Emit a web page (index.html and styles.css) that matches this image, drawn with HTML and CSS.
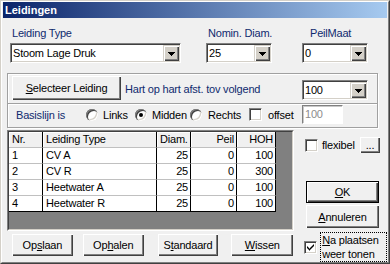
FILE: index.html
```html
<!DOCTYPE html>
<html>
<head>
<meta charset="utf-8">
<link rel="stylesheet" href="styles.css">
</head>
<body>
<div class="window">
  <div class="frame">
    <div class="titlebar">Leidingen</div>

    <div class="fields">
      <div class="field f-type">
        <div class="label">Leiding Type</div>
        <div class="combo"><span class="combo-text">Stoom Lage Druk</span><span class="combo-btn"><svg width="7" height="4" viewBox="0 0 7 4"><path d="M0 0H7V1H6V2H5V3H4V4H3V3H2V2H1V1H0Z"/></svg></span></div>
      </div>
      <div class="field f-diam">
        <div class="label label-diam">Nomin. Diam.</div>
        <div class="combo"><span class="combo-text">25</span><span class="combo-btn"><svg width="7" height="4" viewBox="0 0 7 4"><path d="M0 0H7V1H6V2H5V3H4V4H3V3H2V2H1V1H0Z"/></svg></span></div>
      </div>
      <div class="field f-peil">
        <div class="label label-peil">PeilMaat</div>
        <div class="combo"><span class="combo-text">0</span><span class="combo-btn"><svg width="7" height="4" viewBox="0 0 7 4"><path d="M0 0H7V1H6V2H5V3H4V4H3V3H2V2H1V1H0Z"/></svg></span></div>
      </div>
    </div>

    <div class="group">
      <div class="row-a">
        <div class="btn btn-select"><span><u>S</u>electeer Leiding</span></div>
        <div class="navy hoh-text">Hart op hart afst. tov volgend</div>
        <div class="combo combo-hoh"><span class="combo-text">100</span><span class="combo-btn"><svg width="7" height="4" viewBox="0 0 7 4"><path d="M0 0H7V1H6V2H5V3H4V4H3V3H2V2H1V1H0Z"/></svg></span></div>
      </div>
      <div class="row-b">
        <div class="navy basis">Basislijn is</div>
        <div class="opt opt-links"><span class="radio"></span><span class="opt-text">Links</span></div>
        <div class="opt opt-midden"><span class="radio checked"></span><span class="opt-text">Midden</span></div>
        <div class="opt opt-rechts"><span class="radio"></span><span class="opt-text rechts-text">Rechts</span></div>
        <span class="check"></span>
        <span class="offset-label">offset</span>
        <div class="textbox disabled">100</div>
      </div>
    </div>

    <div class="main">
      <div class="grid-box">
        <div class="grid-inner">
          <div class="table">
            <div class="cell head">Nr.</div>
            <div class="cell head">Leiding Type</div>
            <div class="cell head">Diam.</div>
            <div class="cell head num">Peil</div>
            <div class="cell head num">HOH</div>

            <div class="cell">1</div>
            <div class="cell">CV A</div>
            <div class="cell num">25</div>
            <div class="cell num">0</div>
            <div class="cell num">100</div>

            <div class="cell">2</div>
            <div class="cell">CV R</div>
            <div class="cell num">25</div>
            <div class="cell num">0</div>
            <div class="cell num">300</div>

            <div class="cell">3</div>
            <div class="cell">Heetwater A</div>
            <div class="cell num">25</div>
            <div class="cell num">0</div>
            <div class="cell num">100</div>

            <div class="cell last">4</div>
            <div class="cell last">Heetwater R</div>
            <div class="cell num last">25</div>
            <div class="cell num last">0</div>
            <div class="cell num last">100</div>
          </div>
        </div>
      </div>
      <div class="side">
        <div class="flex-row">
          <span class="check"></span>
          <span class="flex-label">flexibel</span>
          <div class="btn btn-dots">...</div>
        </div>
        <div class="btn btn-ok"><span><u>O</u>K</span></div>
        <div class="btn btn-cancel"><span><u>A</u>nnuleren</span></div>
      </div>
    </div>

    <div class="bottom">
      <div class="btn btn-bottom b-opslaan"><span>Op<u>s</u>laan</span></div>
      <div class="btn btn-bottom b-ophalen"><span>Op<u>h</u>alen</span></div>
      <div class="btn btn-bottom b-standaard"><span>S<u>t</u>andaard</span></div>
      <div class="btn btn-bottom b-wissen"><span><u>W</u>issen</span></div>
      <span class="check checked-box"><svg width="9" height="9" viewBox="0 0 9 9"><path d="M1 3.5H2V4.5H3V5.5H4V4.5H5V3.5H6V2.5H7V1.5H8V3.5H7V4.5H6V5.5H5V6.5H4V7.5H3V6.5H2V5.5H1Z"/></svg></span>
      <div class="na-label"><u>N</u>a plaatsen<br>weer tonen</div>
    </div>
  </div>
</div>
</body>
</html>
```

FILE: styles.css
```css
body {
  margin: 0;
  font-family: "Liberation Sans", Arial, sans-serif;
  font-size: 11px;
  letter-spacing: -0.2px;
  color: #000;
  background: #fff;
}

.window {
  box-sizing: border-box;
  width: 390px;
  height: 264px;
  border: 1px solid;
  border-color: #d4d0c8 #404040 #404040 #d4d0c8;
  background: #f0f0f0;
  overflow: hidden;
}

.frame {
  box-sizing: border-box;
  height: 262px;
  border: 1px solid;
  border-color: #ffffff #808080 #808080 #ffffff;
  padding: 0 1px;
}

.titlebar {
  height: 16px;
  line-height: 16px;
  padding-left: 2px;
  background: linear-gradient(to right, #0a246a, #a6caf0);
  color: #fff;
  font-weight: bold;
  font-size: 11px;
  letter-spacing: 0;
}

.navy { color: #0f2a6e; }

/* top fields */
.fields {
  display: flex;
  margin-top: 9px;
}
.field { display: flex; flex-direction: column; }
.f-type { margin-left: 7px; width: 171px; }
.f-diam { margin-left: 25px; width: 66px; }
.f-peil { margin-left: 30px; width: 66px; }

.label {
  height: 13px;
  line-height: 13px;
  margin-bottom: 3px;
  padding-left: 2px;
  color: #0f2a6e;
  white-space: nowrap;
}
.label-peil { padding-left: 8px; }

.combo {
  box-sizing: border-box;
  height: 20px;
  display: flex;
  align-items: center;
  background: #fff;
  border: 1px solid;
  border-color: #808080 #ffffff #ffffff #808080;
  box-shadow: inset 1px 1px 0 #404040, inset -1px -1px 0 #d4d0c8;
}
.combo-text {
  flex: 1;
  padding-left: 2px;
  line-height: 14px;
  white-space: nowrap;
}
.combo-btn {
  box-sizing: border-box;
  width: 16px;
  height: 16px;
  margin-right: 1px;
  display: flex;
  align-items: center;
  justify-content: center;
  background: #d4d0c8;
  box-shadow: inset 1px 1px 0 #ffffff, inset -1px -1px 0 #404040, inset -2px -2px 0 #808080;
  border-top: 1px solid #d4d0c8;
  border-left: 1px solid #d4d0c8;
}
.combo-btn svg { display: block; fill: #000; }

/* group */
.group {
  box-sizing: border-box;
  margin-top: 10px;
  margin-left: 4px;
  width: 371px;
  border: 1px solid #a0a0a0;
  box-shadow: inset 1px 1px 0 #fff, 1px 1px 0 #fff;
}
.row-a {
  height: 29px;
  display: flex;
  align-items: center;
  padding-left: 4px;
}
.btn {
  box-sizing: border-box;
  background: #f0f0f0;
  display: flex;
  align-items: center;
  justify-content: center;
  box-shadow: inset 1px 1px 0 #ffffff, inset -1px -1px 0 #404040, inset -2px -2px 0 #808080;
  white-space: nowrap;
}
.btn-select {
  width: 109px;
  height: 24px;
  margin-top: -1px;
}
.hoh-text { margin-left: 4px; }
.combo-hoh {
  width: 66px;
  margin-left: auto;
  margin-right: 9px;
  margin-top: 3px;
}

.row-b {
  box-sizing: border-box;
  height: 24px;
  border-top: 1px solid #a0a0a0;
  box-shadow: inset 0 1px 0 #fff;
  display: flex;
  align-items: center;
  padding-bottom: 3px;
  padding-top: 1px;
}
.basis { margin-left: 8px; width: 70px; }
.opt { display: flex; align-items: center; white-space: nowrap; }
.opt-links { width: 49px; }
.opt-midden { width: 55px; }
.opt-rechts { width: 59px; }
.opt-text { margin-left: 5px; }
.rechts-text { margin-left: 6px; }

.radio {
  position: relative;
  flex: none;
  display: inline-block;
  width: 12px;
  height: 12px;
  border-radius: 50%;
  background: #fff;
  box-shadow: inset 1px 1px 0 #808080, inset 2px 2px 0 #404040, inset -1px -1px 0 #ffffff, inset -2px -2px 0 #d4d0c8;
}
.radio.checked::after {
  content: "";
  position: absolute;
  left: 4px;
  top: 4px;
  width: 4px;
  height: 4px;
  border-radius: 50%;
  background: #000;
}

.check {
  box-sizing: border-box;
  flex: none;
  display: inline-flex;
  align-items: center;
  justify-content: center;
  width: 13px;
  height: 13px;
  background: #fff;
  border: 1px solid;
  border-color: #808080 #ffffff #ffffff #808080;
  box-shadow: inset 1px 1px 0 #404040, inset -1px -1px 0 #d4d0c8;
}
.check svg { display: block; fill: #000; }
.offset-label { margin-left: 6px; }
.textbox {
  box-sizing: border-box;
  width: 41px;
  height: 19px;
  margin-left: auto;
  margin-right: 34px;
  padding-left: 2px;
  line-height: 17px;
  background: #fff;
  border: 1px solid;
  border-color: #808080 #ffffff #ffffff #808080;
  box-shadow: inset 1px 1px 0 #c8c8c8;
}
.textbox.disabled { color: #8c8c8c; }

/* main */
.main {
  display: flex;
  margin-top: 2px;
}
.grid-box {
  box-sizing: border-box;
  margin-left: 4px;
  width: 287px;
  height: 101px;
  border: 1px solid;
  border-color: #808080 #ffffff #ffffff #808080;
}
.grid-inner {
  box-sizing: border-box;
  height: 99px;
  border: 1px solid;
  border-color: #404040 #d4d0c8 #d4d0c8 #404040;
  background: #808080;
}
.table {
  display: grid;
  grid-template-columns: 34px 114px 34px 46px 39px;
  grid-auto-rows: 16px;
  width: 267px;
}
.cell {
  box-sizing: border-box;
  background: #fff;
  border-right: 1px solid #000;
  border-bottom: 1px solid #c0c0c0;
  padding-left: 3px;
  line-height: 15px;
  white-space: nowrap;
}
.cell.head { background: #f0f0f0; box-shadow: inset 1px 1px 0 #fff; }
.cell.num { text-align: right; padding-left: 0; padding-right: 2px; }
.cell.last { border-bottom-color: #000; }

.side {
  width: 93px;
  display: flex;
  flex-direction: column;
}
.flex-row {
  display: flex;
  align-items: center;
  height: 16px;
  margin-top: 7px;
  padding-left: 11px;
}
.flex-label { margin-left: 4px; }
.btn-dots {
  width: 20px;
  height: 16px;
  margin-left: auto;
  margin-right: 7px;
  align-items: flex-end;
  line-height: 12px;
  padding-bottom: 2px;
}
.btn-ok {
  margin-top: 28px;
  margin-left: 12px;
  width: 73px;
  height: 22px;
  border: 1px solid #000;
}
.btn-cancel {
  margin-top: 2px;
  margin-left: 12px;
  width: 73px;
  height: 23px;
}

/* bottom */
.bottom {
  display: flex;
  align-items: flex-start;
  margin-top: 1px;
  height: 30px;
}
.btn-bottom {
  margin-top: 2px;
  width: 61px;
  height: 22px;
}
.b-opslaan { margin-left: 9px; }
.b-ophalen { margin-left: 10px; }
.b-standaard { margin-left: 14px; }
.b-wissen { margin-left: 13px; width: 62px; }
.checked-box { margin-left: 11px; margin-top: 9px; }
.na-label {
  box-sizing: border-box;
  margin-left: 3px;
  width: 67px;
  height: 30px;
  border: 1px dotted #000;
  padding-left: 1px;
  line-height: 14px;
  white-space: nowrap;
}
```
